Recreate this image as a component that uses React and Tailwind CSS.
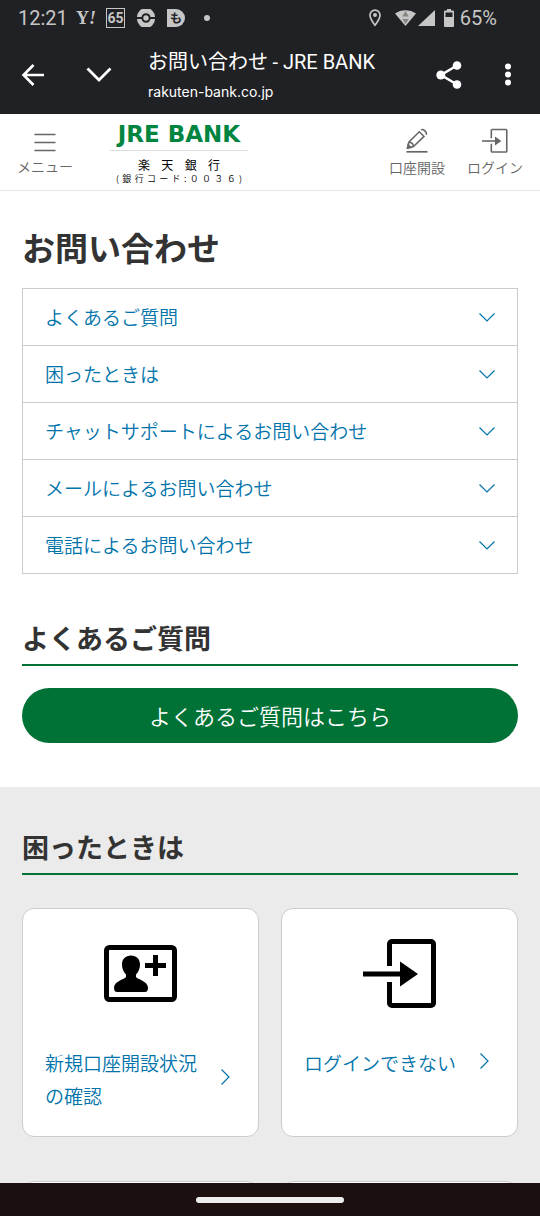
const TOPICS = [
  'よくあるご質問',
  '困ったときは',
  'チャットサポートによるお問い合わせ',
  'メールによるお問い合わせ',
  '電話によるお問い合わせ',
];

function StatusBar() {
  return (
    <div className="flex h-9 items-center justify-between pl-[18px] pr-[43px] font-['Roboto',sans-serif] text-xl text-[#c6c6c6]">
      <div className="flex items-center">
        <span className="w-[58px]">12:21</span>
        <span className="w-[30px] font-['Liberation_Serif',serif] text-lg font-bold leading-5">
          Y<i>!</i>
        </span>
        <span className="mr-3 flex h-5 w-[19px] items-center justify-center border border-[#c6c6c6] font-['Roboto',sans-serif] text-sm font-bold">
          65
        </span>
        <svg className="mr-3 size-[18px]" viewBox="0 0 18 18" aria-hidden="true">
          <path d="M0 8a9 9 0 0 1 18 0h-4.500a4.600 4.600 0 0 0-9 0zM0 10h4.500a4.600 4.600 0 0 0 9 0H18A9 9 0 0 1 0 10z" fill="currentColor" />
          <circle cx="9" cy="9" r="2.700" fill="currentColor" />
        </svg>
        <span className="mr-[19px] flex size-[18px] items-center justify-center rounded-r-full bg-[#c6c6c6] font-['Noto_Sans_CJK_JP',sans-serif] text-xs font-bold leading-none text-[#202124]">
          も
        </span>
        <span className="size-1.5 rounded-full bg-[#c6c6c6]" />
      </div>
      <div className="flex items-center">
        <svg className="mr-[14px] h-[18px] w-3" viewBox="0 0 12 18" fill="none" aria-hidden="true">
          <path d="M6 16.200C3.200 12.500 1 9.400 1 6.200a5 5 0 0 1 10 0c0 3.200-2.200 6.300-5 10z" stroke="currentColor" strokeWidth="1.700" />
          <circle cx="6" cy="6" r="2" fill="currentColor" />
        </svg>
        <svg className="h-[18px] w-[42px]" viewBox="0 0 42 18" aria-hidden="true">
          <path d="M0 4.500C6 0 15 0 21 4.500L10.500 17z" fill="currentColor" />
          <path d="M10.500 2l3.200 5.500H7.300zM7.300 10h6.400l-3.200 5z" fill="#858585" />
          <path d="M40 1v16H23z" fill="currentColor" />
        </svg>
        <svg className="ml-[7px] mr-[6px] h-[18px] w-[10px]" viewBox="0 0 10 18" aria-hidden="true">
          <path d="M3 0h4v1.500h2a1 1 0 0 1 1 1V17a1 1 0 0 1-1 1H1a1 1 0 0 1-1-1V2.500a1 1 0 0 1 1-1h2z" fill="currentColor" />
          <path d="M1.500 3.500h7V8h-7z" fill="#202124" />
        </svg>
        <span>65%</span>
      </div>
    </div>
  );
}

function BrowserBar() {
  return (
    <div className="flex h-[78px] items-center px-5 text-white">
      <button aria-label="戻る" className="mr-10">
        <svg className="size-[26px]" viewBox="0 0 26 26" fill="none" stroke="currentColor" strokeWidth="2.600" aria-hidden="true">
          <path d="M24 13H3.500M13.500 3L3.500 13l10 10" />
        </svg>
      </button>
      <button aria-label="閉じる">
        <svg className="h-4 w-[26px]" viewBox="0 0 26 16" fill="none" stroke="currentColor" strokeWidth="2.800" aria-hidden="true">
          <path d="M1.500 1.500L13 13 24.500 1.500" />
        </svg>
      </button>
      <div className="ml-9 min-w-0 flex-1">
        <p className="truncate text-xl leading-8">
          お問い合わせ <span className="font-['Roboto',sans-serif]">- JRE BANK</span>
        </p>
        <p className="truncate font-['Inter',sans-serif] text-sm leading-7">rakuten-bank.co.jp</p>
      </div>
      <button aria-label="共有" className="mr-[34px]">
        <svg className="h-7 w-[26px]" viewBox="0 0 26 28" aria-hidden="true">
          <path d="M21 4.500L5 14l16 9.500" fill="none" stroke="currentColor" strokeWidth="2.600" />
          <circle cx="21" cy="4.500" r="4.300" fill="currentColor" />
          <circle cx="4.800" cy="14" r="4.500" fill="currentColor" />
          <circle cx="21" cy="23.500" r="4.300" fill="currentColor" />
        </svg>
      </button>
      <button aria-label="メニュー" className="px-2">
        <svg className="h-6 w-2" viewBox="0 0 8 24" fill="currentColor" aria-hidden="true">
          <circle cx="4" cy="3.500" r="3" />
          <circle cx="4" cy="11.500" r="3" />
          <circle cx="4" cy="19.500" r="3" />
        </svg>
      </button>
    </div>
  );
}

function LoginIcon({ className, weight }) {
  return (
    <svg className={className} viewBox="0 0 74 70" fill="none" aria-hidden="true">
      <path d="M26.500 27V5a2.500 2.500 0 0 1 2.500-2.500h39A2.500 2.500 0 0 1 70.500 5v59a2.500 2.500 0 0 1-2.500 2.500H29a2.500 2.500 0 0 1-2.500-2.500V43" stroke="currentColor" strokeWidth={weight} />
      <path d="M0 35h40" stroke="currentColor" strokeWidth={weight} />
      <path d="M37 22.500L55 35 37 47.500z" fill="currentColor" />
    </svg>
  );
}

function ContactIcon() {
  return (
    <svg className="h-[57px] w-[73px]" viewBox="0 0 73 57" aria-hidden="true">
      <rect x="2.500" y="2.500" width="68" height="52" rx="3" fill="none" stroke="currentColor" strokeWidth="5" />
      <path d="M27 10.500c5.500 0 9 3.500 9 9 0 4-1.500 7.500-4 10v2.500c1 2 12 4.500 12 10.500 0 3-1 4.500-3 4.500H13c-2 0-3-1.500-3-4.500 0-6 11-8.500 12-10.500v-2.500c-2.500-2.500-4-6-4-10 0-5.500 3.500-9 9-9z" fill="currentColor" />
      <path d="M51.500 10v21M41 20.500h21" stroke="currentColor" strokeWidth="5" fill="none" />
    </svg>
  );
}

function SpreadText({ text, className }) {
  return (
    <span className={className}>
      {[...text].map((char, index) => (
        <span key={index}>{char}</span>
      ))}
    </span>
  );
}

function SiteHeader() {
  return (
    <header className="flex h-[77px] items-start border-b border-[#e5e5e5] bg-white px-[17px] text-sm text-[#666]">
      <button className="flex w-14 flex-col items-center pt-[17px]">
        <svg className="h-[22px] w-[22px]" viewBox="0 0 22 22" stroke="currentColor" strokeWidth="1.600" aria-hidden="true">
          <path d="M.5 3.500h21M.5 11.500h21M.5 19.500h21" />
        </svg>
        <span className="mt-0.5 whitespace-nowrap font-[350] leading-[22px]">メニュー</span>
      </button>
      <a href="#top" className="ml-[37px] flex w-[138px] flex-col items-center whitespace-nowrap text-black">
        <span className="flex h-[37px] w-full items-center justify-center border-b border-[#ddd] pt-1 font-['DejaVu_Sans',sans-serif] text-[23px] font-bold leading-8 text-[#008540]">
          JRE BANK
        </span>
        <SpreadText text="楽天銀行" className="flex w-[82px] justify-between pt-[5px] text-xs leading-[18px]" />
        <SpreadText
          text={'(銀行コード:\uff10\uff10\uff13\uff16)'}
          className="flex w-[126px] justify-between text-[9px] font-[350] leading-[10px]"
        />
      </a>
      <nav className="ml-auto flex gap-[22px]">
        <a href="#open" className="flex flex-col items-center pt-[14px]">
          <svg className="h-[26px] w-[22px]" viewBox="0 0 22 26" fill="none" stroke="currentColor" strokeWidth="1.500" aria-hidden="true">
            <path d="M1.500 20l1.500-6L13.300 3.700l4.700 4.700L7.500 18.500zM3 14q4 .5 4.500 4.500M15 2q1.500-1.200 3.300.4l1 1q1.800 1.800.6 3.300" />
            <path d="M1.500 20l.6-3.300 2.700 2.700z" fill="currentColor" />
            <path d="M.5 23.800h21" strokeWidth="1.700" />
          </svg>
          <span className="mt-0.5 whitespace-nowrap font-[350] leading-[22px]">口座開設</span>
        </a>
        <a href="#login" className="flex flex-col items-center pt-[14px]">
          <LoginIcon className="h-[26px] w-[26px]" weight="4.500" />
          <span className="mt-0.5 whitespace-nowrap font-[350] leading-[22px]">ログイン</span>
        </a>
      </nav>
    </header>
  );
}

function SectionHeading({ children }) {
  return (
    <h2 className="border-b-2 border-[#007236] pb-1.5 text-[27px] font-bold leading-10 text-[#333]">{children}</h2>
  );
}

function HelpCard({ icon, label }) {
  return (
    <a href="#help" className="flex min-h-[229px] flex-col rounded-xl border border-[#ccc] bg-white px-[22px] text-[19px] font-[350] leading-[33px] text-[#0073aa]">
      <span className="mb-2 flex h-[129px] items-center justify-center text-black">{icon}</span>
      <span className="flex items-center justify-between gap-4 pr-1.5">
        <span>{label}</span>
        <svg className="mb-1 h-4 w-[9px] shrink-0" viewBox="0 0 9 16" fill="none" stroke="currentColor" strokeWidth="1.200" aria-hidden="true">
          <path d="M.5.5L8 8 .5 15.500" />
        </svg>
      </span>
    </a>
  );
}

export default function App() {
  return (
    <div className="flex h-screen flex-col bg-white font-['Noto_Sans_CJK_JP',sans-serif]" lang="ja">
      <div className="shrink-0 bg-[#202124]">
        <StatusBar />
        <BrowserBar />
      </div>
      <div className="min-h-0 flex-1 overflow-hidden">
        <SiteHeader />
        <main>
          <div className="px-[22px] pb-11 pt-[31px]">
            <h1 className="text-[33px] font-bold leading-[50px] text-[#333]">お問い合わせ</h1>
            <ul className="mt-4 divide-y divide-[#ccc] border border-[#ccc]">
              {TOPICS.map((topic) => (
                <li key={topic}>
                  <a href="#topic" className="flex h-14 items-center justify-between px-[22px] text-[19px] font-[350] text-[#0073aa]">
                    {topic}
                    <svg className="h-[9px] w-4 shrink-0" viewBox="0 0 16 9" fill="none" stroke="currentColor" strokeWidth="1.200" aria-hidden="true">
                      <path d="M.5.5L8 8 15.500.5" />
                    </svg>
                  </a>
                </li>
              ))}
            </ul>
            <div className="mt-11">
              <SectionHeading>よくあるご質問</SectionHeading>
            </div>
            <a href="#faq" className="mt-[22px] flex h-[55px] items-center justify-center rounded-full bg-[#007236] text-[22px] font-[350] text-white">
              よくあるご質問はこちら
            </a>
          </div>
          <section className="bg-[#ebebeb] px-[22px] pb-11 pt-10">
            <SectionHeading>困ったときは</SectionHeading>
            <div className="mt-[33px] grid grid-cols-2 gap-x-[22px] gap-y-11">
              <HelpCard icon={<ContactIcon />} label="新規口座開設状況の確認" />
              <HelpCard icon={<LoginIcon className="h-[70px] w-[74px]" weight="5" />} label="ログインできない" />
              <div className="h-[229px] rounded-xl border border-[#ccc] bg-white" />
              <div className="h-[229px] rounded-xl border border-[#ccc] bg-white" />
            </div>
          </section>
        </main>
      </div>
      <div className="flex h-[33px] shrink-0 items-center justify-center bg-[#1b100f]">
        <span className="h-1.5 w-[148px] rounded-full bg-[#ededed]" />
      </div>
    </div>
  );
}
